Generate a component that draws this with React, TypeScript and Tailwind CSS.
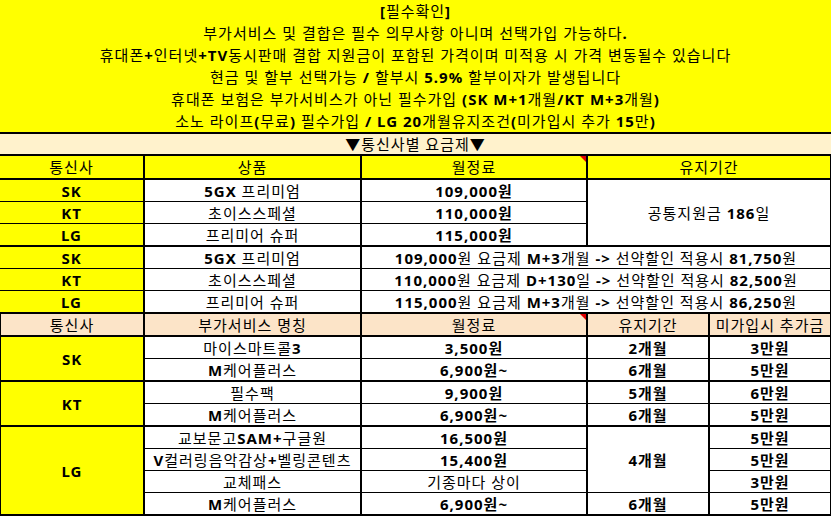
import type { ReactNode } from 'react'

const FONT = { fontFamily: '"Noto Sans", "Noto Sans CJK KR", sans-serif' }

type Weight = 'plain' | 'mix' | 'bold'

/** 엑셀 셀 글씨: 영문/숫자는 굵게, 한글은 셀 서식에 따라 */
function Mix({ text, w = 'mix' }: { text: string; w?: Weight }) {
  const parts = text.split(/([\x00-\x7F]+)/).filter(Boolean)
  return (
    <span className="whitespace-pre">
      {parts.map((p, i) => {
        const ascii = /^[\x00-\x7F]+$/.test(p)
        const cls = w === 'plain' ? 'font-normal' : w === 'bold' || ascii ? 'font-bold' : 'font-normal'
        return (
          <span key={i} className={cls}>
            {p}
          </span>
        )
      })}
    </span>
  )
}

function Cell({
  children,
  className = '',
  mark = false,
}: {
  children?: ReactNode
  className?: string
  mark?: boolean
}) {
  return (
    <div
      className={`relative flex items-center justify-center whitespace-nowrap border-black text-[15px] leading-[20px] ${className}`}
    >
      {children}
      {mark && (
        <span className="absolute top-0 right-0 h-0 w-0 border-t-[6px] border-l-[6px] border-t-[#e00000] border-l-transparent" />
      )}
    </div>
  )
}

const NOTICE = [
  '[필수확인]',
  '부가서비스 및 결합은 필수 의무사항 아니며 선택가입 가능하다.',
  '휴대폰+인터넷+TV동시판매 결합 지원금이 포함된 가격이며 미적용 시 가격 변동될수 있습니다',
  '현금 및 할부 선택가능 / 할부시 5.9% 할부이자가 발생됩니다',
  '휴대폰 보험은 부가서비스가 아닌 필수가입 (SK M+1개월/KT M+3개월)',
  '소노 라이프(무료) 필수가입 / LG 20개월유지조건(미가입시 추가 15만)',
]

const PLANS = [
  { carrier: 'SK', name: '5GX 프리미엄', price: '109,000원' },
  { carrier: 'KT', name: '초이스스페셜', price: '110,000원' },
  { carrier: 'LG', name: '프리미어 슈퍼', price: '115,000원' },
]

const DISCOUNTS = [
  { carrier: 'SK', name: '5GX 프리미엄', note: '109,000원 요금제 M+3개월 -> 선약할인 적용시 81,750원' },
  { carrier: 'KT', name: '초이스스페셜', note: '110,000원 요금제 D+130일 -> 선약할인 적용시 82,500원' },
  { carrier: 'LG', name: '프리미어 슈퍼', note: '115,000원 요금제 M+3개월 -> 선약할인 적용시 86,250원' },
]

// 부가서비스 행: [명칭, 월정료, 유지기간(null = 위 셀과 병합), 추가금]
const ADDONS: { carrier: string; rows: [string, string, string | null, string][] }[] = [
  {
    carrier: 'SK',
    rows: [
      ['마이스마트콜3', '3,500원', '2개월', '3만원'],
      ['M케어플러스', '6,900원~', '6개월', '5만원'],
    ],
  },
  {
    carrier: 'KT',
    rows: [
      ['필수팩', '9,900원', '5개월', '6만원'],
      ['M케어플러스', '6,900원~', '6개월', '5만원'],
    ],
  },
  {
    carrier: 'LG',
    rows: [
      ['교보문고SAM+구글원', '16,500원', '4개월', '5만원'],
      ['V컬러링음악감상+벨링콘텐츠', '15,400원', null, '5만원'],
      ['교체패스', '기종마다 상이', null, '3만원'],
      ['M케어플러스', '6,900원~', '6개월', '5만원'],
    ],
  },
]

const YELLOW = 'bg-[#ffff00]'
const WHITE = 'bg-white'

export default function App() {
  return (
    <div className="h-[516px] w-[831px] overflow-hidden bg-white tracking-[1px] text-black" style={FONT}>
      {/* 안내문 */}
      <div className={`${YELLOW} flex h-[134px] flex-col items-center border-b-2 border-black text-[15px] leading-[22px]`}>
        {NOTICE.map((line) => (
          <p key={line} className="whitespace-nowrap">
            <Mix text={line} />
          </p>
        ))}
      </div>

      <div className="flex h-[22px] items-center justify-center border-b-2 border-black bg-[#fff2cc] text-[15px]">
        <Mix text="▼통신사별 요금제▼" w="plain" />
      </div>

      {/* 통신사별 요금제 */}
      <div className="grid grid-cols-[145px_217px_226px_122px_121px] grid-rows-[24px_22px_22px_23px_22px_22px_23px]">
        <Cell className={`${YELLOW} border-r-2 border-b-2`}>
          <Mix text="통신사" w="plain" />
        </Cell>
        <Cell className={`${YELLOW} border-r-2 border-b-2`}>
          <Mix text="상품" w="plain" />
        </Cell>
        <Cell className={`${YELLOW} border-r-2 border-b-2`} mark>
          <Mix text="월정료" w="plain" />
        </Cell>
        <Cell className={`${YELLOW} col-span-2 border-r border-b-2`}>
          <Mix text="유지기간" w="plain" />
        </Cell>

        {PLANS.map((p, i) => {
          const b = i === 2 ? 'border-b-2' : 'border-b'
          return [
            <Cell key={`c${i}`} className={`${YELLOW} border-r-2 ${b}`}>
              <Mix text={p.carrier} />
            </Cell>,
            <Cell key={`n${i}`} className={`${WHITE} border-r-2 ${b}`}>
              <Mix text={p.name} />
            </Cell>,
            <Cell key={`p${i}`} className={`${WHITE} border-r-2 ${b}`}>
              <Mix text={p.price} w="bold" />
            </Cell>,
            i === 0 ? (
              <Cell key="keep" className={`${WHITE} col-span-2 row-span-3 border-r border-b-2`}>
                <Mix text="공통지원금 186일" />
              </Cell>
            ) : null,
          ]
        })}

        {DISCOUNTS.map((d, i) => {
          const b = i === 2 ? 'border-b-2' : 'border-b'
          return [
            <Cell key={`dc${i}`} className={`${YELLOW} border-r-2 ${b}`}>
              <Mix text={d.carrier} />
            </Cell>,
            <Cell key={`dn${i}`} className={`${WHITE} border-r-2 ${b}`}>
              <Mix text={d.name} />
            </Cell>,
            <Cell key={`dd${i}`} className={`${WHITE} col-span-3 border-r ${b}`}>
              <Mix text={d.note} />
            </Cell>,
          ]
        })}
      </div>

      {/* 부가서비스 */}
      <div className="grid grid-cols-[144px_217px_226px_122px_121px] grid-rows-[23px_22px_23px_22px_23px_22px_22px_22px_23px] border-l border-black">
        {['통신사', '부가서비스 명칭', '월정료', '유지기간', '미가입시 추가금'].map((h, i) => (
          <Cell
            key={h}
            className={`border-b-2 bg-[#fce4c8] ${i === 4 ? 'border-r' : 'border-r-2'}`}
            mark={i === 2}
          >
            <Mix text={h} w="plain" />
          </Cell>
        ))}

        {ADDONS.map((g) => [
          <Cell
            key={g.carrier}
            className={`${YELLOW} border-r-2 border-b-2 ${g.rows.length === 4 ? 'row-span-4' : 'row-span-2'}`}
          >
            <Mix text={g.carrier} />
          </Cell>,
          ...g.rows.map(([name, price, keep, fee], i) => {
            const last = i === g.rows.length - 1
            const b = last ? 'border-b-2' : 'border-b'
            return [
              <Cell key={`${g.carrier}n${i}`} className={`border-r-2 ${b}`}>
                <Mix text={name} />
              </Cell>,
              <Cell key={`${g.carrier}p${i}`} className={`border-r-2 ${b}`}>
                <Mix text={price} w={price === '기종마다 상이' ? 'plain' : 'bold'} />
              </Cell>,
              keep === null ? null : (
                <Cell
                  key={`${g.carrier}k${i}`}
                  className={`border-r-2 ${b} ${keep === '4개월' ? 'row-span-3' : ''}`}
                >
                  <Mix text={keep} w="bold" />
                </Cell>
              ),
              <Cell key={`${g.carrier}f${i}`} className={`border-r ${b}`}>
                <Mix text={fee} w="bold" />
              </Cell>,
            ]
          }),
        ])}
      </div>
    </div>
  )
}
